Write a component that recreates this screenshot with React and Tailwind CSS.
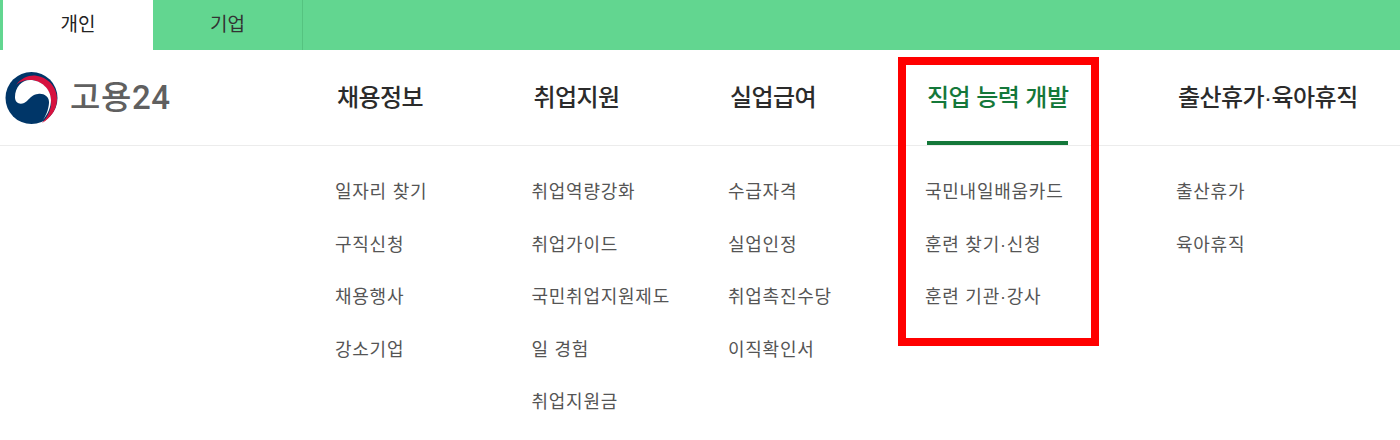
import { useState } from "react";

const MENUS = [
    { title: "채용정보", width: "w-[196.5px]", items: ["일자리 찾기", "구직신청", "채용행사", "강소기업"] },
    { title: "취업지원", width: "w-[196.5px]", items: ["취업역량강화", "취업가이드", "국민취업지원제도", "일 경험", "취업지원금"] },
    { title: "실업급여", width: "w-[197px]", items: ["수급자격", "실업인정", "취업촉진수당", "이직확인서"] },
    { title: "직업 능력 개발", width: "w-[251px]", active: true, items: ["국민내일배움카드", "훈련 찾기·신청", "훈련 기관·강사"] },
    { title: "출산휴가·육아휴직", width: "w-[200px]", items: ["출산휴가", "육아휴직"] },
];

const Logo = () => (
    <svg width="54" height="52" viewBox="0 0 54 52" className="shrink-0">
        <circle cx="26.5" cy="26" r="26" fill="#003668" />
        <path d="M11 13C16 6 24 3 30 3.5C43 5 52 15 52 27C52 37 46 46 37 51C43 45 47 36 46 28C45 16 35 8 25 8C19 8 14 10 11 13Z" fill="#d6123f" />
        <path d="M10 25C10 15 17 8 25 8C36 8 46 17 46 28C46 35 43 42 38 48C42 42 44 35 44 30C44 24 38 21 33 22C28 22 25 26 22 29C18 33 10 33 10 25Z" fill="#fff" />
    </svg>
);

export default function App() {
    const [tab, setTab] = useState("개인");

    return (
        <div className="relative h-[440px] w-[1400px] overflow-hidden bg-white font-['Liberation_Sans','Noto_Sans_CJK_KR',sans-serif]">
            <div className="flex h-[50px] bg-[#62d690] pl-[3px]">
                {["개인", "기업"].map((name) => (
                    <button
                        key={name}
                        onClick={() => setTab(name)}
                        className={`w-[150px] pt-[1px] text-[19px] ${
                            tab === name
                                ? "bg-white text-[#222]"
                                : "border-r border-[#55c380] text-[#333]"
                        }`}
                    >
                        {name}
                    </button>
                ))}
            </div>

            <div className="flex h-[96px] border-b border-[#ececec] pl-[5px]">
                <div className="flex w-[330px] items-start pt-[22px]">
                    <Logo />
                    <span className="ml-[11px] font-['Roboto','Noto_Sans_CJK_KR',sans-serif] text-[33px] leading-[52px] font-medium tracking-[0.6px] text-[#606060]">고용24</span>
                </div>
                {MENUS.map((menu) => (
                    <div key={menu.title} className={`${menu.width} shrink-0 pl-[2px]`}>
                        <div
                            className={`inline-block h-[95px] pt-[29px] text-[24px] leading-[38px] font-medium tracking-[-0.55px] whitespace-nowrap ${
                                menu.active
                                    ? "border-b-4 border-[#14783a] text-[#14783a]"
                                    : "text-[#2b2b2b]"
                            }`}
                        >
                            {menu.title}
                        </div>
                    </div>
                ))}
            </div>

            <div className="flex pt-[20px] pl-[335px]">
                {MENUS.map((menu) => (
                    <ul key={menu.title} className={`${menu.width} shrink-0`}>
                        {menu.items.map((item) => (
                            <li key={item} className="h-[52.5px] text-[18px] leading-[52.5px] tracking-[0.75px] whitespace-nowrap text-[#555]">
                                {item}
                            </li>
                        ))}
                    </ul>
                ))}
            </div>

            <div className="absolute top-[57px] left-[898px] h-[289px] w-[201px] border-8 border-[#ff0000]" />
        </div>
    );
}
